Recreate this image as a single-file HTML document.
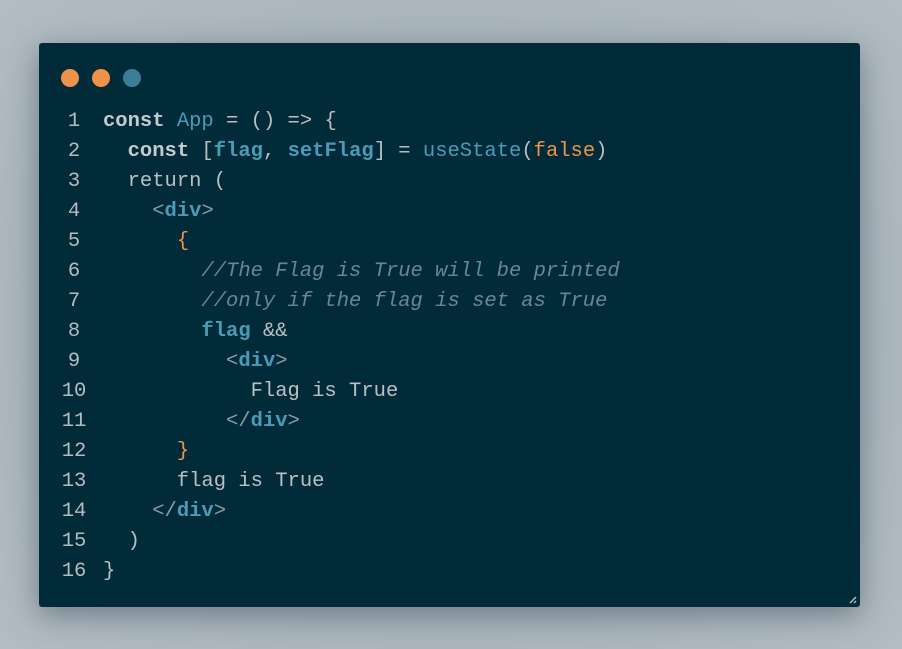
<!DOCTYPE html>
<html><head><meta charset="utf-8"><style>
html,body{margin:0;padding:0;width:902px;height:649px;overflow:hidden;background:radial-gradient(ellipse at 50% 50%,#a2adb5 0%,#a9b4bc 60%,#b2bcc3 100%);}
.card{position:absolute;left:39px;top:43px;width:821px;height:564px;background:#022b3a;border-radius:3px;box-shadow:0 8px 30px rgba(60,75,85,.55);}
.dot{position:absolute;top:26px;width:18px;height:18px;border-radius:50%;}
.code{position:absolute;left:0;top:64px;width:800px;font-family:"Liberation Mono",monospace;font-size:20.5px;line-height:30px;color:#b9c0c3;}
.l{height:30px;position:relative}
.ln{position:absolute;left:15px;width:40px;text-align:center;color:#b4bcc0;}
.t{position:absolute;left:64px;white-space:pre}
.k{font-weight:bold;color:#c4cacd}
.b{color:#4b9bb8}
.bb{color:#4b9bb8;font-weight:bold}
.o{color:#ef944c}
.c{color:#6a8791;font-style:italic}
.g{color:#8c9ea5}
</style></head><body>
<div class="card">
<div class="dot" style="left:22px;background:#f0924a"></div>
<div class="dot" style="left:53px;background:#f0924a"></div>
<div class="dot" style="left:84px;background:#3d7d96"></div>
<div class="code"><div class="l"><span class="ln">1</span><span class="t"><span class="k">const</span> <span class="b">App</span> = () =&gt; {</span></div><div class="l"><span class="ln">2</span><span class="t">  <span class="k">const</span> [<span class="bb">flag</span>, <span class="bb">setFlag</span>] = <span class="b">useState</span>(<span class="o">false</span>)</span></div><div class="l"><span class="ln">3</span><span class="t">  return (</span></div><div class="l"><span class="ln">4</span><span class="t">    <span class="g">&lt;</span><span class="bb">div</span><span class="g">&gt;</span></span></div><div class="l"><span class="ln">5</span><span class="t">      <span class="o">{</span></span></div><div class="l"><span class="ln">6</span><span class="t">        <span class="c">//The Flag is True will be printed</span></span></div><div class="l"><span class="ln">7</span><span class="t">        <span class="c">//only if the flag is set as True</span></span></div><div class="l"><span class="ln">8</span><span class="t">        <span class="bb">flag</span> &amp;&amp;</span></div><div class="l"><span class="ln">9</span><span class="t">          <span class="g">&lt;</span><span class="bb">div</span><span class="g">&gt;</span></span></div><div class="l"><span class="ln">10</span><span class="t">            Flag is True</span></div><div class="l"><span class="ln">11</span><span class="t">          <span class="g">&lt;/</span><span class="bb">div</span><span class="g">&gt;</span></span></div><div class="l"><span class="ln">12</span><span class="t">      <span class="o">}</span></span></div><div class="l"><span class="ln">13</span><span class="t">      flag is True</span></div><div class="l"><span class="ln">14</span><span class="t">    <span class="g">&lt;/</span><span class="bb">div</span><span class="g">&gt;</span></span></div><div class="l"><span class="ln">15</span><span class="t">  )</span></div><div class="l"><span class="ln">16</span><span class="t">}</span></div></div>
<svg style="position:absolute;right:2px;bottom:2px" width="10" height="10"><path d="M2 8L8 2M6 8L8 6" stroke="#b0bcc2" stroke-width="1.5"/></svg>
</div>
</body></html>
